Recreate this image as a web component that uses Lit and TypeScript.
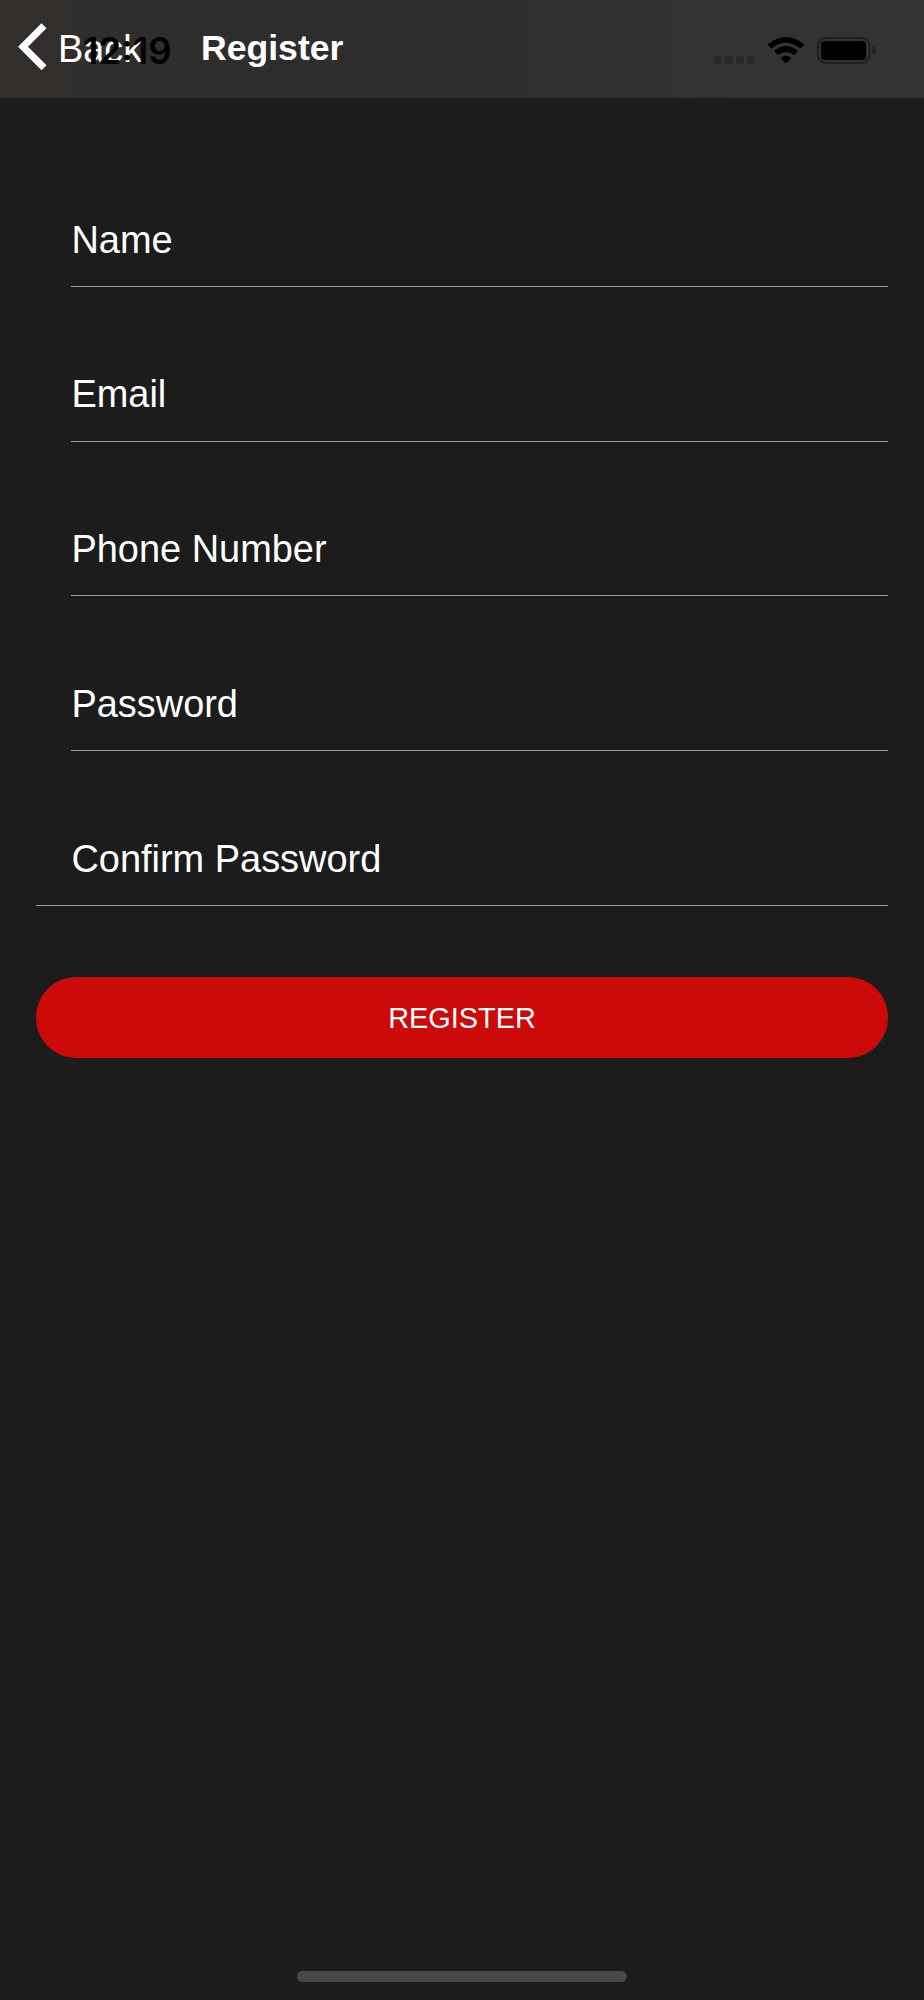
import { LitElement, html, css, svg } from "lit";
import { customElement, property } from "lit/decorators.js";

@customElement("form-field")
class FormField extends LitElement {
  @property() label = "";
  @property({ type: Boolean, reflect: true }) last = false;
  static styles = css`
    :host { display: flex; box-sizing: border-box; height: 154.8px; margin-left: 35.4px; border-bottom: 1px solid #999; }
    :host([last]) { margin-left: 0; padding-left: 35.4px; }
    .label { padding-top: 85.5px; font-size: 37.95px; line-height: 44px; color: #fff; }
  `;
  render() { return html`<label class="label">${this.label}</label>`; }
}

@customElement("app-root")
class AppRoot extends LitElement {
  static styles = css`
    :host { display: flex; flex-direction: column; box-sizing: border-box; height: 2000px; background: #1c1c1c; color: #fff; font-family: "Liberation Sans", Arial, sans-serif; overflow: hidden; }
    .header { position: relative; box-sizing: border-box; display: flex; align-items: flex-start; height: 98px; flex: none; padding-left: 18px; background: linear-gradient(90deg, #322e2c 0%, #2f2e2c 15%, #2e2d2e 33%, #2e2e2e 55%, #333 80%, #333 100%); border-bottom: 1px solid #2d2d2d; }
    .chevron { width: 29px; height: 48px; margin-top: 23px; }
    .back { margin: 27px 0 0 11px; width: 143px; font-size: 37.9px; line-height: 44px; }
    .title { margin: 28px 0 0; font-size: 35.6px; line-height: 41px; font-weight: 700; }
    .status { position: absolute; inset: 0; }
    .time { position: absolute; left: 83px; top: 29px; font: 600 36.5px/44px Inter, sans-serif; color: #000; }
    .icons { position: absolute; left: 710px; top: 30px; width: 170px; height: 40px; }
    .form { flex: 1; display: flex; flex-direction: column; padding: 34px 36px 0; }
    .button { flex: none; height: 81px; margin-top: 71px; padding: 1px 0 0; border: 0; border-radius: 40px; background: #cd0a0a; color: #fff; font: 28.9px/34px "Liberation Sans", Arial, sans-serif; }
    .home { flex: none; align-self: center; width: 330px; height: 11px; border-radius: 6px; background: #484848; margin-bottom: 18px; }
  `;
  render() {
    const fields = ["Name", "Email", "Phone Number", "Password", "Confirm Password"];
    return html`
      <header class="header">
        <svg class="chevron" viewBox="0 0 29 48"><path d="M26 2.7 5 23.7 26 44.7" fill="none" stroke="#fff" stroke-width="7"/></svg>
        <span class="back">Back</span>
        <h1 class="title">Register</h1>
        <div class="status">
          <span class="time">12:19</span>
          <svg class="icons" viewBox="710 30 170 40">
            ${[714, 725, 736, 747].map((x) => svg`<rect x=${x} y="56" width="8" height="7.5" rx="2.6" fill="#282828"/>`)}
            <path d="M767.5 44.5Q786 29.5 804.5 44.5L800.5 48.5Q786 37 771.5 48.5Z"/>
            <path d="M774 51Q786 41 798 51L794 55Q786 49 778 55Z"/>
            <path d="M780.5 58Q786 53.5 791.5 58L786 63.5Z"/>
            <rect x="818" y="38" width="51.5" height="25" rx="7.5" fill="none" stroke="#202020" stroke-width="2"/>
            <rect x="821" y="41" width="45" height="19" rx="4"/>
            <path d="M872.5 46Q876 47 876 50.5T872.5 55Z" fill="#202020"/>
          </svg>
        </div>
      </header>
      <main class="form">
        ${fields.map((f, i) => html`<form-field label=${f} ?last=${i === fields.length - 1}></form-field>`)}
        <button class="button">REGISTER</button>
      </main>
      <div class="home"></div>`;
  }
}
